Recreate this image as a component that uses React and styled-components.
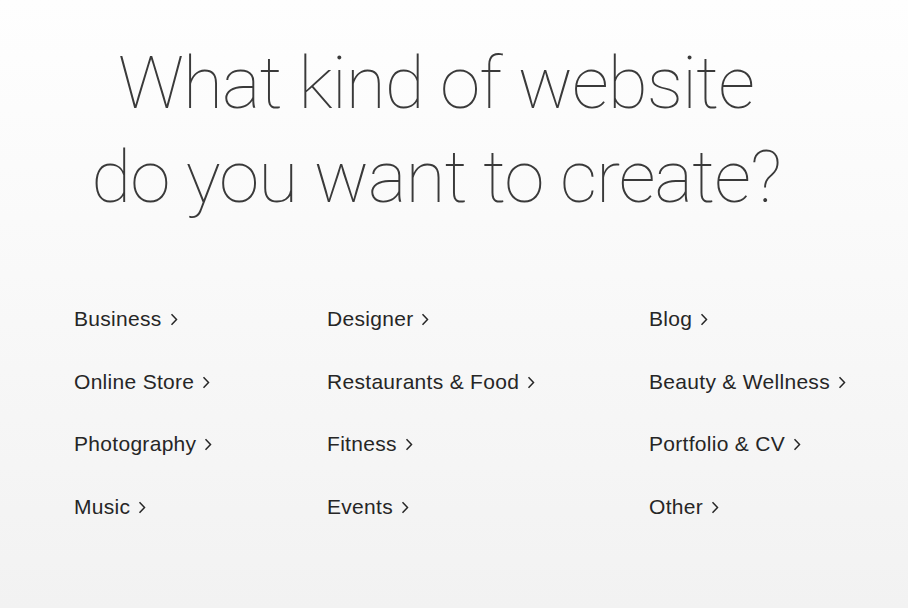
import React from "react";
import styled, { createGlobalStyle } from "styled-components";

const Global = createGlobalStyle`
  html, body { margin: 0; padding: 0; }
  body {
    width: 908px;
    height: 608px;
    overflow: hidden;
    font-family: "Liberation Sans", Arial, sans-serif;
  }
`;

const Page = styled.main`
  box-sizing: border-box;
  width: 908px;
  height: 608px;
  padding-top: 36px;
  background: linear-gradient(180deg, #fefefe 0%, #f9f9f9 45%, #f2f2f2 100%);
  display: flex;
  flex-direction: column;
`;

const Title = styled.h1`
  margin: 0 36px 0 0;
  font-family: Roboto, Inter, sans-serif;
  font-weight: 100;
  font-size: 73px;
  line-height: 94px;
  letter-spacing: -1px;
  color: #3a3a3a;
  text-align: center;
`;

const Grid = styled.ul`
  list-style: none;
  margin: 0;
  padding: 0 0 0 74px;
  margin-top: 83px;
  display: grid;
  grid-template-columns: 253px 322px 1fr;
  row-gap: 38.5px;
`;

const Item = styled.li`
  display: flex;
  align-items: center;
  gap: 8px;
  font-size: 21px;
  line-height: 24px;
  letter-spacing: 0.3px;
  color: #262626;
  cursor: pointer;
`;

const Chevron = () => (
  <svg width="8" height="13" viewBox="0 0 8 13" fill="none" style={{ marginTop: 1 }}>
    <path d="M1.5 1.2 L6.5 6.5 L1.5 11.8" stroke="#262626" strokeWidth="1.5" />
  </svg>
);

const rows = [
  ["Business", "Designer", "Blog"],
  ["Online Store", "Restaurants & Food", "Beauty & Wellness"],
  ["Photography", "Fitness", "Portfolio & CV"],
  ["Music", "Events", "Other"],
];

export default function App() {
  return (
    <>
      <Global />
      <Page>
        <Title>
          What kind of website
          <br />
          do you want to create?
        </Title>
        <Grid>
          {rows.flat().map((label) => (
            <Item key={label}>
              {label}
              <Chevron />
            </Item>
          ))}
        </Grid>
      </Page>
    </>
  );
}
